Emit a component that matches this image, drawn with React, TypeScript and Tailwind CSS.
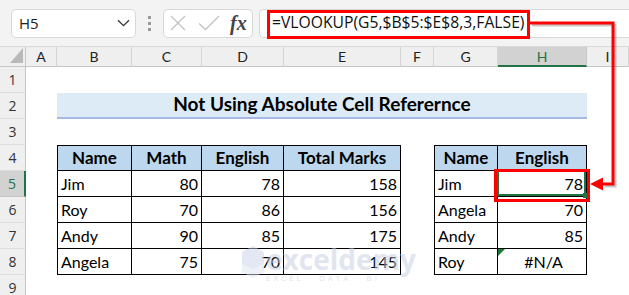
import React from 'react';

const COLS = ['A', 'B', 'C', 'D', 'E', 'F', 'G', 'H', 'I'];
const ROWS = [1, 2, 3, 4, 5, 6, 7, 8, 9];

const marks = [
  ['Jim', 80, 78, 158],
  ['Roy', 70, 86, 156],
  ['Andy', 90, 85, 175],
  ['Angela', 75, 70, 145],
];

const lookup: [string, string][] = [
  ['Jim', '78'],
  ['Angela', '70'],
  ['Andy', '85'],
  ['Roy', '#N/A'],
];

function Chevron() {
  return (
    <svg width="13" height="8" viewBox="0 0 13 8" fill="none">
      <path d="M1 1.2 6.5 6.6 12 1.2" stroke="#333" strokeWidth="1.3" />
    </svg>
  );
}

function FormulaBar() {
  return (
    <div className="flex h-[47px] items-center border-b border-[#dadada] bg-[#f3f3f3] pl-[11px] font-['Open_Sans',sans-serif]">
      <div className="flex h-[29px] w-[125px] items-center justify-between rounded-[5px] border border-[#d8d8d8] bg-white pl-[7px] pr-[5px] text-[15px] text-[#222]">
        <span>H5</span>
        <Chevron />
      </div>
      <div className="mx-[12px] flex flex-col gap-[3px]">
        <span className="h-[3px] w-[3px] bg-[#9a9a9a]" />
        <span className="h-[3px] w-[3px] bg-[#9a9a9a]" />
        <span className="h-[3px] w-[3px] bg-[#9a9a9a]" />
      </div>
      <div className="flex h-[29px] w-[90px] items-center rounded-[5px] border border-[#d8d8d8] bg-white pl-[6px]">
        <svg width="16" height="16" viewBox="0 0 16 16" fill="none">
          <path d="M1 1 15 15M15 1 1 15" stroke="#c2c2c2" strokeWidth="1.3" />
        </svg>
        <svg className="ml-[12px]" width="22" height="16" viewBox="0 0 22 16" fill="none">
          <path d="M1 8.5 7.5 14.5 21 1" stroke="#c2c2c2" strokeWidth="1.3" />
        </svg>
        <span className="ml-[10px] font-['Liberation_Serif',serif] text-[20px] leading-none font-bold italic text-[#444]">
          fx
        </span>
      </div>
      <div className="ml-[6px] flex h-[29px] flex-1 items-center rounded-l-[5px] border border-r-0 border-[#d8d8d8] bg-white pl-[12px] text-[15.7px] text-[#111]">
        =VLOOKUP(G5,$B$5:$E$8,3,FALSE)
      </div>
    </div>
  );
}

function ColumnHeaders() {
  return (
    <>
      <div className="relative h-[20px] border-r border-b border-[#c6c6c6] bg-[#efefef]">
        <svg className="absolute left-[10px] top-[1px]" width="13" height="15" viewBox="0 0 13 15">
          <path d="M13 0V15H0Z" fill="#b9b9b9" />
        </svg>
      </div>
      {COLS.map((c) =>
        c === 'H' ? (
          <div
            key={c}
            className="flex h-[20px] items-center justify-center border-r border-b-2 border-r-[#c6c6c6] border-b-[#217346] bg-[#d2d2d2] text-[14px] text-[#217346]"
          >
            {c}
          </div>
        ) : (
          <div
            key={c}
            className="flex h-[20px] items-center justify-center border-r border-b border-[#d4d4d4] border-b-[#c6c6c6] bg-[#efefef] text-[14px] text-[#222]"
          >
            {c}
          </div>
        )
      )}
    </>
  );
}

function RowHeader({ n }: { n: number }) {
  if (n === 5) {
    return (
      <div className="flex h-[26px] items-center justify-center border-r-2 border-b border-r-[#217346] border-b-[#c6c6c6] bg-[#d2d2d2] font-['Open_Sans',sans-serif] text-[14px] text-[#217346]">
        {n}
      </div>
    );
  }
  return (
    <div className="flex h-[26px] items-center justify-center border-r border-b border-r-[#c6c6c6] border-b-[#dcdcdc] bg-[#efefef] font-['Open_Sans',sans-serif] text-[14px] text-[#333]">
      {n}
    </div>
  );
}

const head =
  'flex h-[26px] items-center justify-center border-r border-b border-black bg-[#bdd7ee] text-[17px] font-bold text-black';
const txt = 'flex h-[26px] items-center border-r border-b border-black pl-[3px] text-[16px] text-black';
const num = 'flex h-[26px] items-center justify-end border-r border-b border-black pr-[3px] text-[16px] text-black';

function Row({ n }: { n: number }) {
  const cells: React.ReactNode[] = [<RowHeader key="h" n={n} />, <div key="A" />];

  if (n === 2) {
    // merged B2:H2
    cells.push(
      <div
        key="title"
        className="col-span-7 flex h-[26px] items-center justify-center border-b-[2px] border-[#a7b9e2] bg-[#ddebf7] pb-[2px] text-[19px] font-bold text-black"
      >
        Not Using Absolute Cell Referernce
      </div>
    );
    cells.push(<div key="I" />);
    return <>{cells}</>;
  }

  if (n === 4) {
    cells.push(
      <div key="B" className={`${head} border-t border-l`}>Name</div>,
      <div key="C" className={`${head} border-t`}>Math</div>,
      <div key="D" className={`${head} border-t`}>English</div>,
      <div key="E" className={`${head} border-t`}>Total Marks</div>,
      <div key="F" />,
      <div key="G" className={`${head} border-t border-l`}>Name</div>,
      <div key="H" className={`${head} border-t`}>English</div>,
      <div key="I" />
    );
    return <>{cells}</>;
  }

  if (n >= 5 && n <= 8) {
    const [name, math, eng, total] = marks[n - 5];
    const [lName, lVal] = lookup[n - 5];
    cells.push(
      <div key="B" className={`${txt} border-l`}>{name}</div>,
      <div key="C" className={num}>{math}</div>,
      <div key="D" className={num}>{eng}</div>,
      <div key="E" className={num}>{total}</div>,
      <div key="F" />,
      <div key="G" className={`${txt} border-l`}>{lName}</div>
    );
    if (n === 5) {
      cells.push(
        <div key="H" className={`${num} relative`}>
          <div className="absolute -top-px -left-px right-0 bottom-0 border-2 border-[#217346]" />
          <div className="absolute right-[-2px] bottom-[-2px] h-[5px] w-[5px] bg-[#217346]" />
          <span className="relative">{lVal}</span>
        </div>
      );
    } else if (n === 8) {
      cells.push(
        <div key="H" className={`${txt} relative justify-center pl-0`}>
          <svg className="absolute left-0 top-0" width="7" height="7" viewBox="0 0 7 7">
            <path d="M0 0H7L0 7Z" fill="#1e7b34" />
          </svg>
          {lVal}
        </div>
      );
    } else {
      cells.push(<div key="H" className={num}>{lVal}</div>);
    }
    cells.push(<div key="I" />);
    return <>{cells}</>;
  }

  COLS.slice(1).forEach((c) => cells.push(<div key={c} className="h-[26px]" />));
  return <>{cells}</>;
}

function Sheet() {
  return (
    <div className="grid grid-cols-[26px_31px_75px_70px_82px_117px_33px_64px_89px_1fr] font-['Lato',sans-serif]">
      <ColumnHeaders />
      {ROWS.map((n) => (
        <Row key={n} n={n} />
      ))}
    </div>
  );
}

// red callout from the formula to the result cell
function Callout() {
  return (
    <svg className="pointer-events-none absolute left-0 top-0" width="629" height="295" viewBox="0 0 629 295" fill="none">
      <path d="M532 25H615V186H605" stroke="#000" strokeOpacity="0.22" strokeWidth="3" />
      <rect x="268.5" y="11.5" width="260" height="26" stroke="#ff0000" strokeWidth="3" />
      <rect x="495.5" y="170.5" width="93" height="30" stroke="#ff0000" strokeWidth="3" />
      <path d="M530 23H613V184H601" stroke="#ff0000" strokeWidth="3" />
      <path d="M590 184 603 177.5V190.5Z" fill="#ff0000" />
    </svg>
  );
}

function Watermark() {
  return (
    <div className="pointer-events-none absolute left-[242px] top-[246px] flex items-start opacity-50">
      <svg width="22" height="32" viewBox="0 0 22 32">
        <path d="M11 0 22 6V18L11 24 0 18V6Z" fill="#c9d3ea" />
        <path d="M11 24 22 18V26L11 32 0 26V18Z" fill="#dbe2f1" />
      </svg>
      <div className="ml-[2px] flex flex-col font-['Open_Sans',sans-serif]">
        <span className="text-[28px] leading-[26px] font-bold text-[#c3cde3]">exceldemy</span>
        <span className="mt-[2px] text-[8px] leading-none tracking-[3px] text-[#c3c8d2]">EXCEL · DATA · BI</span>
      </div>
    </div>
  );
}

export default function App() {
  return (
    <div className="relative h-[295px] w-[629px] overflow-hidden bg-white">
      <FormulaBar />
      <Sheet />
      <Watermark />
      <Callout />
    </div>
  );
}
